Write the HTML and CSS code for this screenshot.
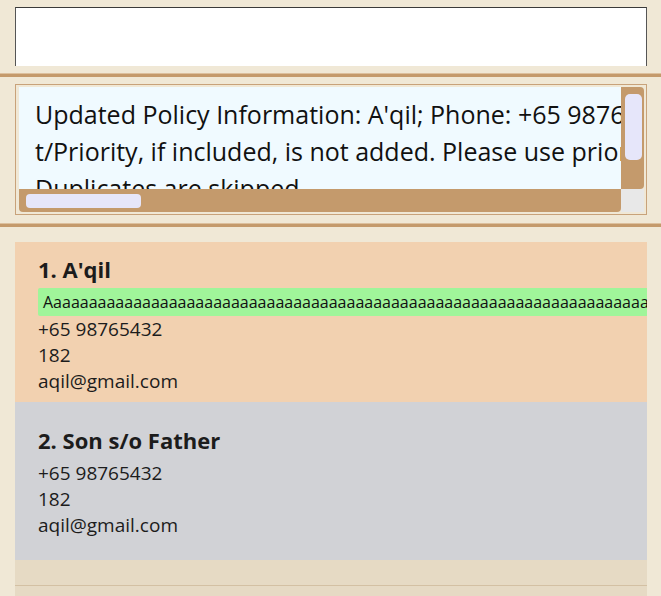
FILE: index.html
```html
<!DOCTYPE html>
<html>
<head>
<meta charset="utf-8">
<link rel="stylesheet" href="styles.css">
</head>
<body>
<div class="command"><div class="command-box"></div></div>
<div class="divider"></div>
<div class="result-wrap">
  <div class="result">
    <div class="result-text">Updated Policy Information: A'qil; Phone: +65 98765432; Address: 182; Email: aqil@gmail.com
t/Priority, if included, is not added. Please use priority command to set priority.
Duplicates are skipped.</div>
    <div class="vscroll"><div class="vthumb"></div></div>
    <div class="hscroll"><div class="hthumb"></div></div>
    <div class="corner"></div>
  </div>
</div>
<div class="divider divider-2"></div>
<div class="list">
  <div class="card card-1">
    <div class="name">1. A'qil</div>
    <div class="tags"><span class="tag">Aaaaaaaaaaaaaaaaaaaaaaaaaaaaaaaaaaaaaaaaaaaaaaaaaaaaaaaaaaaaaaaaaaaaaaaaaaaaaaaaaaaaaaaaaaa</span></div>
    <div class="field">+65 98765432</div>
    <div class="field">182</div>
    <div class="field">aqil@gmail.com</div>
  </div>
  <div class="card card-2">
    <div class="name">2. Son s/o Father</div>
    <div class="field">+65 98765432</div>
    <div class="field">182</div>
    <div class="field">aqil@gmail.com</div>
  </div>
  <div class="list-rest"><div class="list-line"></div></div>
</div>
</body>
</html>
```
FILE: styles.css
```css
html, body {
  margin: 0;
  padding: 0;
  height: 596px;
  overflow: hidden;
}
body {
  background: #f0e8d6;
  font-family: "Open Sans", "Noto Sans", sans-serif;
  color: #1c1c1c;
}
.command {
  padding: 7px 14px 0 15px;
}
.command-box {
  height: 58px;
  background: #fff;
  border-top: 1px solid #3a3a3a;
  border-left: 1px solid #555;
  border-right: 1px solid #555;
}
.divider {
  margin-top: 7px;
  height: 3px;
  background: #c49a6c;
  border-top: 1px solid #dcc09e;
}
.divider-2 {
  margin-top: 8px;
}
.result-wrap {
  padding: 7px 14px 0 15px;
}
.result {
  border: 1px solid #c8a27a;
  padding: 2px 2px 2px 3px;
  display: grid;
  grid-template-columns: 1fr 23px;
  grid-template-rows: 102px 23px;
  height: 125px;
}
.result-text {
  background: #f0faff;
  white-space: pre;
  overflow: hidden;
  font-size: 25px;
  line-height: 37px;
  padding: 9px 0 0 16px;
  color: #111;
}
.vscroll {
  background: #c49a6c;
  border-radius: 0 4px 4px 0;
  padding: 7px 2px 0 4px;
}
.vthumb {
  height: 66px;
  background: #e6e6fa;
  border-radius: 5px;
}
.hscroll {
  background: #c49a6c;
  border-radius: 0 0 4px 4px;
  padding: 5px 0 0 7px;
}
.hthumb {
  width: 115px;
  height: 14px;
  background: #e6e6fa;
  border-radius: 4px;
}
.corner {
  background: #e8e8e8;
}
.list {
  margin: 15px 14px 0 15px;
  background: #e6dac4;
  height: 354px;
  overflow: hidden;
}
.card {
  padding: 12px 0 0 23px;
  box-sizing: border-box;
  overflow: hidden;
}
.card-1 {
  background: #f2d1b0;
  height: 160px;
}
.card-2 {
  background: #d1d2d6;
  height: 158px;
  padding-top: 23px;
}
.name {
  font-size: 22px;
  font-weight: 700;
  line-height: 30px;
  margin-bottom: 4px;
}
.card-2 .name {
  margin-bottom: 5px;
}
.tags {
  white-space: nowrap;
}
.tag {
  display: inline-block;
  background: #a0f59a;
  border-radius: 2px 0 0 2px;
  font-size: 16px;
  line-height: 28px;
  height: 28px;
  padding: 0 5px;
  color: #111;
}
.field {
  font-size: 19px;
  line-height: 26px;
}
.list-rest {
  height: 36px;
  padding-top: 25px;
  box-sizing: border-box;
}
.list-line {
  height: 1px;
  background: #d3c0a3;
}
```
